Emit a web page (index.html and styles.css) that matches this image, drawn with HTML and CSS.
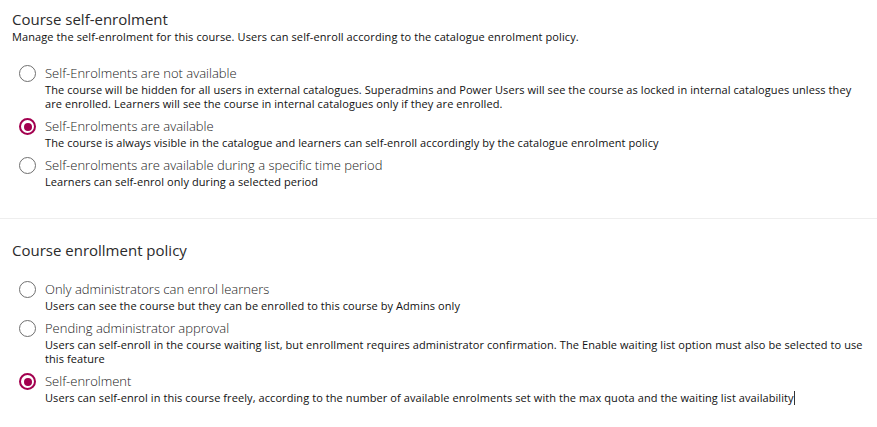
FILE: index.html
```html
<!DOCTYPE html>
<html>
<head>
<meta charset="utf-8">
<link rel="stylesheet" href="styles.css">
</head>
<body>
<section class="section first">
  <h2 class="title">Course self-enrolment</h2>
  <p class="subtitle">Manage the self-enrolment for this course. Users can self-enroll according to the catalogue enrolment policy.</p>
  <div class="options">
    <div class="option">
      <span class="radio"></span>
      <div class="text">
        <div class="label">Self-Enrolments are not available</div>
        <div class="desc">The course will be hidden for all users in external catalogues. Superadmins and Power Users will see the course as locked in internal catalogues unless they are enrolled. Learners will see the course in internal catalogues only if they are enrolled.</div>
      </div>
    </div>
    <div class="option">
      <span class="radio checked"></span>
      <div class="text">
        <div class="label">Self-Enrolments are available</div>
        <div class="desc">The course is always visible in the catalogue and learners can self-enroll accordingly by the catalogue enrolment policy</div>
      </div>
    </div>
    <div class="option">
      <span class="radio"></span>
      <div class="text">
        <div class="label">Self-enrolments are available during a specific time period</div>
        <div class="desc">Learners can self-enrol only during a selected period</div>
      </div>
    </div>
  </div>
</section>
<section class="section second">
  <h2 class="title">Course enrollment policy</h2>
  <div class="options">
    <div class="option">
      <span class="radio"></span>
      <div class="text">
        <div class="label">Only administrators can enrol learners</div>
        <div class="desc">Users can see the course but they can be enrolled to this course by Admins only</div>
      </div>
    </div>
    <div class="option">
      <span class="radio"></span>
      <div class="text">
        <div class="label">Pending administrator approval</div>
        <div class="desc">Users can self-enroll in the course waiting list, but enrollment requires administrator confirmation. The Enable waiting list option must also be selected to use this feature</div>
      </div>
    </div>
    <div class="option">
      <span class="radio checked"></span>
      <div class="text">
        <div class="label">Self-enrolment</div>
        <div class="desc">Users can self-enrol in this course freely, according to the number of available enrolments set with the max quota and the waiting list availability<span class="caret"></span></div>
      </div>
    </div>
  </div>
</section>
</body>
</html>
```
FILE: styles.css
```css
html, body {
  margin: 0;
  padding: 0;
  background: #ffffff;
}
body {
  font-family: "Open Sans", "Noto Sans", sans-serif;
  color: #333333;
  width: 877px;
}
.section {
  padding: 9px 12px 0 12px;
}
.section.first {
  padding-bottom: 29px;
  border-bottom: 1px solid #eeeeee;
}
.section.second {
  padding-top: 21px;
}
.title {
  margin: 0;
  font-size: 15px;
  line-height: 20px;
  font-weight: 400;
  color: #2b2b2b;
}
.subtitle {
  margin: 1px 0 0 0;
  font-size: 11px;
  line-height: 14px;
  font-weight: 400;
  letter-spacing: 0.1px;
  color: #111111;
}
.options {
  display: flex;
  flex-direction: column;
  gap: 6px;
  margin-top: 20px;
  padding-left: 7px;
}
.option {
  display: flex;
  gap: 9px;
  align-items: flex-start;
}
.radio {
  flex: none;
  box-sizing: border-box;
  width: 17px;
  height: 17px;
  margin-top: 1px;
  border: 1.5px solid #6f6f6f;
  border-radius: 50%;
  position: relative;
}
.radio.checked {
  border: 2px solid #a3004f;
}
.radio.checked::after {
  content: "";
  position: absolute;
  left: 2.5px;
  top: 2.5px;
  width: 8px;
  height: 8px;
  border-radius: 50%;
  background: #a3004f;
}
.text {
  display: flex;
  flex-direction: column;
  gap: 1px;
}
.label {
  font-size: 13px;
  line-height: 18px;
  font-weight: 300;
  color: #222222;
}
.desc {
  font-size: 11px;
  line-height: 14px;
  font-weight: 400;
  letter-spacing: 0.08px;
  color: #111111;
}
.caret {
  display: inline-block;
  width: 1px;
  height: 14px;
  background: #333;
  vertical-align: -3px;
}
```
